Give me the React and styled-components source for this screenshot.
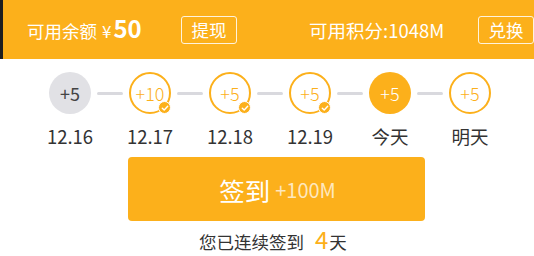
import styled, { createGlobalStyle } from 'styled-components'

const ORANGE = '#fcb01b'

const GlobalStyle = createGlobalStyle`
  * { box-sizing: border-box; }
  html, body { margin: 0; padding: 0; background: #fff; }
  body {
    font-family: "Noto Sans CJK SC", "Noto Sans", sans-serif;
    overflow: hidden;
  }
`

const days = [
  { label: '12.16', points: 5, state: 'missed' },
  { label: '12.17', points: 10, state: 'done' },
  { label: '12.18', points: 5, state: 'done' },
  { label: '12.19', points: 5, state: 'done' },
  { label: '今天', points: 5, state: 'today' },
  { label: '明天', points: 5, state: 'future' },
]

const CheckIcon = () => (
  <svg width="8" height="8" viewBox="0 0 8 8">
    <path d="M1.3 4.2 L3.2 6 L6.7 2.2" fill="none" stroke="#fff" strokeWidth="1.4" strokeLinecap="round" strokeLinejoin="round" />
  </svg>
)

const SignIn = () => (
  <Page>
    <GlobalStyle />
    <Header>
      <Balance>
        可用余额 <Yen>¥</Yen><Amount>50</Amount>
      </Balance>
      <HeaderBtn>提现</HeaderBtn>
      <Points>可用积分:1048M</Points>
      <HeaderBtn>兑换</HeaderBtn>
    </Header>

    <Track>
      {days.map((d, i) => (
        <Step key={d.label}>
          {i > 0 && <Connector />}
          <Day>
            <Circle state={d.state}>
              +{d.points}
              {d.state === 'done' && (
                <Badge>
                  <CheckIcon />
                </Badge>
              )}
            </Circle>
            <DayLabel>{d.label}</DayLabel>
          </Day>
        </Step>
      ))}
    </Track>

    <SignBtn>
      签到<Bonus>+100M</Bonus>
    </SignBtn>
    <Streak>
      您已连续签到<StreakNum>4</StreakNum>天
    </Streak>
  </Page>
)

const Page = styled.div`
  width: 534px;
  height: 256px;
  display: flex;
  flex-direction: column;
  overflow: hidden;
`

const Header = styled.header`
  height: 59px;
  flex-shrink: 0;
  display: flex;
  align-items: center;
  padding-left: 24px;
  background: ${ORANGE};
  border-left: 3px solid #1e1e1e;
  color: #fff;
  overflow: hidden;
  white-space: nowrap;
`

const Balance = styled.div`
  display: flex;
  align-items: baseline;
  font-size: 17.5px;
  width: 154px;
  flex-shrink: 0;
  padding-bottom: 4px;
`

const Yen = styled.span`
  margin-left: 5px;
  font-size: 17px;
`

const Amount = styled.span`
  margin-left: 2px;
  font-size: 24px;
  font-weight: 700;
`

const HeaderBtn = styled.button`
  flex-shrink: 0;
  width: 56px;
  height: 28px;
  padding: 0;
  border: 1.5px solid rgba(255, 255, 255, 0.85);
  border-radius: 3px;
  background: transparent;
  color: #fff;
  font-family: inherit;
  font-size: 17.5px;
  line-height: 24px;
`

const Points = styled.div`
  flex-shrink: 0;
  width: 169px;
  margin-left: 72px;
  font-size: 18.5px;
`

const Track = styled.div`
  flex-shrink: 0;
  display: flex;
  align-items: flex-start;
  padding-left: 49px;
  margin-top: 13px;
`

const Step = styled.div`
  display: flex;
  align-items: flex-start;
`

const Connector = styled.div`
  width: 26px;
  height: 3px;
  margin: 20px 6px 0;
  border-radius: 2px;
  background: #d9d9de;
`

const Day = styled.div`
  width: 42px;
  display: flex;
  flex-direction: column;
  align-items: center;
`

const Circle = styled.div`
  position: relative;
  width: 42px;
  height: 42px;
  border-radius: 50%;
  display: flex;
  align-items: center;
  justify-content: center;
  font-size: 18px;
  font-weight: 300;
  ${({ state }) => {
    if (state === 'missed') return 'background: #e1e1e5; color: #444; font-weight: 400;'
    if (state === 'today') return `background: ${ORANGE}; color: #fff;`
    return `border: 2px solid ${ORANGE}; color: ${ORANGE}; background: #fff;`
  }}
`

const Badge = styled.span`
  position: absolute;
  right: -2px;
  bottom: -2px;
  width: 13px;
  height: 13px;
  border-radius: 50%;
  background: ${ORANGE};
  border: 1px solid #fff;
  display: flex;
  align-items: center;
  justify-content: center;
`

const DayLabel = styled.div`
  margin-top: 9px;
  font-size: 18.5px;
  line-height: 27px;
  color: #333;
  white-space: nowrap;
`

const SignBtn = styled.button`
  flex-shrink: 0;
  align-self: flex-start;
  margin: 7px 0 0 128px;
  width: 297px;
  height: 64px;
  border: none;
  border-radius: 4px;
  background: ${ORANGE};
  color: #fff;
  font-family: inherit;
  font-size: 25.5px;
  display: flex;
  align-items: center;
  justify-content: center;
  padding: 0 0 0 2px;
`

const Bonus = styled.span`
  margin-left: 5px;
  font-size: 20px;
  color: rgba(255, 255, 255, 0.72);
`

const Streak = styled.div`
  flex-shrink: 0;
  align-self: flex-start;
  margin: 0 0 0 199px;
  display: flex;
  align-items: baseline;
  font-size: 17.5px;
  color: #333;
`

const StreakNum = styled.span`
  margin: 0 1px 0 11px;
  font-size: 24px;
  color: ${ORANGE};
`

export default SignIn
